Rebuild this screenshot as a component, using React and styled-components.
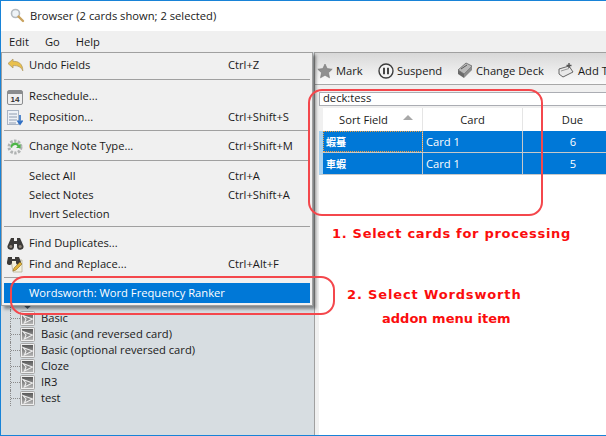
import React from "react";
import styled, { createGlobalStyle } from "styled-components";

const UI_FONT = `"Open Sans", "Noto Sans", "Liberation Sans", "Noto Sans CJK TC", sans-serif`;

const Global = createGlobalStyle`
    html, body {
        margin: 0;
        padding: 0;
        background: #fff;
    }
    body {
        font-family: ${UI_FONT};
        font-size: 11.2px;
        color: #1a1a1a;
    }
`;

const Magnifier = () => (
    <svg width="15" height="15" viewBox="0 0 15 15">
        <circle cx="5.5" cy="5.5" r="4" fill="#eef3f7" stroke="#b4babf" strokeWidth="1.6" />
        <path d="M8.5 8.5L13 13" stroke="#c9a25e" strokeWidth="2.4" strokeLinecap="round" />
    </svg>
);

const UndoIcon = () => (
    <svg width="17" height="14" viewBox="0 0 17 14">
        <path d="M1 5.5L6 1V3.4C11 3 15.8 5.5 15.8 12.8C14 8.8 11 7.4 6 7.6V10Z" fill="#e9c04d" stroke="#b39a62" strokeWidth="0.8" strokeLinejoin="round" />
    </svg>
);

const CalendarIcon = () => (
    <svg width="16" height="16" viewBox="0 0 16 16">
        <rect x="0.5" y="1.5" width="15" height="14" rx="1.5" fill="#efefef" stroke="#8b8d8f" />
        <rect x="1" y="2" width="14" height="3" fill="#8a8c8e" />
        <text x="8" y="13" textAnchor="middle" fontSize="8" fontWeight="700" fontFamily="Liberation Sans" fill="#333">14</text>
    </svg>
);

const RepositionIcon = () => (
    <svg width="16" height="16" viewBox="0 0 16 16">
        <rect x="0.5" y="0.5" width="11" height="14" fill="#eef2f7" stroke="#a9b4c4" />
        <path d="M2 4H10M2 7H10M2 10H10M2 13H9" stroke="#8f9cb0" />
        <path d="M13 5V13M10.5 10.5L13 14L15.5 10.5" fill="none" stroke="#2f6fc4" strokeWidth="1.6" />
    </svg>
);

const GearIcon = () => (
    <svg width="16" height="16" viewBox="0 0 16 16">
        <circle cx="8" cy="8" r="6" fill="none" stroke="#b0b3b3" strokeWidth="3" strokeDasharray="2.4 1.4" />
        <path d="M3.5 8A4.5 4.5 0 0 1 12 6L13.5 4.5V9H9L10.5 7.5A3 3 0 0 0 5 9Z" fill="#4fb548" />
    </svg>
);

const BinocularsIcon = () => (
    <svg width="17" height="13" viewBox="0 0 17 13">
        <path d="M4 1H7V4H10V1H13L16.5 9A3.2 3.2 0 0 1 10 10V7H7V10A3.2 3.2 0 0 1 0.5 9Z" fill="#3c3a38" />
        <circle cx="3.8" cy="9.5" r="1.5" fill="#8d8377" />
        <circle cx="13.2" cy="9.5" r="1.5" fill="#8d8377" />
    </svg>
);

const ReplaceIcon = () => (
    <svg width="17" height="17" viewBox="0 0 17 17">
        <path d="M4 4H15V16H6Z" fill="#f4f1dc" stroke="#b7b29a" strokeWidth="0.8" />
        <path d="M1 1H5V3H8V1H12L14 6A2.4 2.4 0 0 1 9 7V5H5V7A2.4 2.4 0 0 1 0 6Z" fill="#3c3a38" />
        <path d="M6 15L7 12L13 6L15 8L9 14Z" fill="#e2b53c" stroke="#8a6a1c" strokeWidth="0.6" />
    </svg>
);

const StarIcon = () => (
    <svg width="16" height="16" viewBox="0 0 16 16">
        <path d="M8 1L10.2 5.6L15.2 6.2L11.5 9.7L12.5 14.8L8 12.3L3.5 14.8L4.5 9.7L0.8 6.2L5.8 5.6Z" fill="#8f8f8f" stroke="#777" strokeWidth="0.6" />
    </svg>
);

const PauseIcon = () => (
    <svg width="16" height="16" viewBox="0 0 16 16">
        <circle cx="8" cy="8" r="7" fill="#f4f4f4" stroke="#3e3e3e" strokeWidth="1.4" />
        <path d="M6 4.8V11.2M10 4.8V11.2" stroke="#333" strokeWidth="1.8" />
    </svg>
);

const DeckIcon = () => (
    <svg width="16" height="17" viewBox="0 0 16 17">
        <path d="M1 8L9 1L15 4L7 12Z" fill="#b9b9b9" stroke="#555" strokeWidth="0.7" />
        <path d="M1 8L7 12V16L1 12Z" fill="#6a6a6a" />
        <path d="M7 12L15 4V8L7 16Z" fill="#8c8c8c" />
        <path d="M4 7L10 3" stroke="#555" />
    </svg>
);

const TagIcon = () => (
    <svg width="17" height="16" viewBox="0 0 17 16">
        <path d="M1 6L11 3L15 9L5 14L1 11Z" fill="#e9e9e9" stroke="#666" />
        <path d="M3 8L11 5.5" stroke="#999" />
        <path d="M11 0V5M8.5 2.5H13.5" stroke="#555" strokeWidth="1.4" />
    </svg>
);

const NoteIcon = () => (
    <svg width="15" height="15" viewBox="0 0 15 15">
        <defs>
            <linearGradient id="noteFill" x1="0" y1="0" x2="0" y2="1">
                <stop offset="0" stopColor="#5a5a5a" />
                <stop offset="1" stopColor="#b5b5b5" />
            </linearGradient>
        </defs>
        <rect x="0.5" y="0.5" width="14" height="14" rx="1" fill="#eee" stroke="#a5a5a5" />
        <rect x="2" y="2" width="11" height="11" fill="url(#noteFill)" />
        <path d="M3 4.5L12.5 8L4.5 12L6 8Z" fill="#8c8c8c" stroke="#efefef" strokeWidth="1.1" />
    </svg>
);

const DeckTreeIcon = () => (
    <svg width="15" height="15" viewBox="0 0 15 15">
        <path d="M1 8H14L7.5 14Z" fill="#4a5a6a" />
        <path d="M3 3H12V8H3Z" fill="#8a97a3" />
    </svg>
);

const MENU_ITEMS = [
    { label: "Undo Fields", shortcut: "Ctrl+Z", icon: <UndoIcon />, height: 24 },
    { sep: true, before: 2, after: 6 },
    { label: "Reschedule...", icon: <CalendarIcon />, height: 21 },
    { label: "Reposition...", shortcut: "Ctrl+Shift+S", icon: <RepositionIcon />, height: 21 },
    { sep: true, before: 2, after: 5 },
    { label: "Change Note Type...", shortcut: "Ctrl+Shift+M", icon: <GearIcon />, height: 21 },
    { sep: true, before: 3, after: 6 },
    { label: "Select All", shortcut: "Ctrl+A", height: 19 },
    { label: "Select Notes", shortcut: "Ctrl+Shift+A", height: 19 },
    { label: "Invert Selection", height: 19 },
    { sep: true, before: 2, after: 6 },
    { label: "Find Duplicates...", icon: <BinocularsIcon />, height: 21 },
    { label: "Find and Replace...", shortcut: "Ctrl+Alt+F", icon: <ReplaceIcon />, height: 21 },
    { sep: true, before: 2, after: 5 },
    { label: "Wordsworth: Word Frequency Ranker", height: 20, active: true },
];

const NOTE_TYPES = ["Basic", "Basic (and reversed card)", "Basic (optional reversed card)", "Cloze", "IR3", "test"];

const ROWS = [
    { sort: "蝦蟇", card: "Card 1", due: "6", focused: true },
    { sort: "車蝦", card: "Card 1", due: "5" },
];

const App = () => {
    return (
        <Window>
            <Global />
            <TitleBar>
                <Magnifier />
                <span>Browser (2 cards shown; 2 selected)</span>
            </TitleBar>
            <MenuBar>
                <span>Edit</span>
                <span>Go</span>
                <span>Help</span>
            </MenuBar>
            <Body>
                <Sidebar>
                    <Tree>
                        <TreeRow>
                            <TreeDots />
                            <DeckTreeIcon />
                            <TreeLabel>tess</TreeLabel>
                        </TreeRow>
                        {NOTE_TYPES.map((name) => (
                            <TreeRow key={name}>
                                <TreeDots />
                                <NoteIcon />
                                <TreeLabel>{name}</TreeLabel>
                            </TreeRow>
                        ))}
                    </Tree>
                </Sidebar>
                <Main>
                    <Toolbar>
                        <Tool $width={61}><StarIcon /><span>Mark</span></Tool>
                        <Tool $width={79}><PauseIcon /><span>Suspend</span></Tool>
                        <Tool $width={101}><DeckIcon /><span>Change Deck</span></Tool>
                        <Tool><TagIcon /><span>Add Tags</span></Tool>
                    </Toolbar>
                    <Search>deck:tess</Search>
                    <Table>
                        <HeaderRow>
                            <Head $sorted>Sort Field<SortArrow /></Head>
                            <Head>Card</Head>
                            <Head>Due</Head>
                        </HeaderRow>
                        {ROWS.map((row) => (
                            <Row key={row.sort}>
                                <SortCell $focused={row.focused}>{row.sort}</SortCell>
                                <Cell>{row.card}</Cell>
                                <Cell $center>{row.due}</Cell>
                            </Row>
                        ))}
                    </Table>
                </Main>
            </Body>

            <DropMenu>
                {MENU_ITEMS.map((item, i) =>
                    item.sep ? (
                        <Sep key={i} $before={item.before} $after={item.after} />
                    ) : (
                        <Item key={item.label} $height={item.height} $active={item.active}>
                            <ItemIcon>{item.icon}</ItemIcon>
                            <ItemLabel>{item.label}</ItemLabel>
                            {item.shortcut && <Shortcut>{item.shortcut}</Shortcut>}
                        </Item>
                    )
                )}
            </DropMenu>

            <Ring $x={308} $y={89} $w={235} $h={127} />
            <Ring $x={10} $y={276} $w={325} $h={39} />
            <Note $x={332} $y={225} $spacing={0.7}>1. Select cards for processing</Note>
            <Note $x={347} $y={286} $spacing={0.85}>2. Select Wordsworth</Note>
            <Note $x={382} $y={310} $spacing={0}>addon menu item</Note>
        </Window>
    );
};

const Window = styled.div`
    position: relative;
    box-sizing: border-box;
    width: 606px;
    height: 436px;
    overflow: hidden;
    display: flex;
    flex-direction: column;
    border-left: 1px solid #1883d7;
    border-top: 1px solid #1883d7;
    border-bottom: 1px solid #1883d7;
`;

const TitleBar = styled.div`
    height: 30px;
    flex: none;
    box-sizing: border-box;
    display: flex;
    align-items: center;
    gap: 5px;
    padding: 0 0 1px 9px;
    background: #fff;
`;

const MenuBar = styled.div`
    height: 21px;
    flex: none;
    box-sizing: border-box;
    display: flex;
    align-items: center;
    gap: 16px;
    padding-left: 8px;
    background: #f0f0f0;
`;

const Body = styled.div`
    flex: 1;
    display: flex;
    min-height: 0;
`;

const Sidebar = styled.div`
    width: 313px;
    flex: none;
    background: #d7dde1;
    display: flex;
    flex-direction: column;
    justify-content: flex-end;
    padding-bottom: 29px;
`;

const Tree = styled.div`
    display: flex;
    flex-direction: column;
`;

const TreeRow = styled.div`
    height: 16px;
    display: flex;
    align-items: center;
    padding-left: 9px;
`;

const TreeDots = styled.i`
    width: 10px;
    height: 16px;
    flex: none;
    box-sizing: border-box;
    border-left: 1px dotted #8a8a8a;
    background: repeating-linear-gradient(90deg, #8a8a8a 0 1px, transparent 1px 2px) no-repeat 0 8px / 100% 1px;
`;

const TreeLabel = styled.span`
    margin: 0 0 2px 6px;
`;

const Main = styled.div`
    flex: 1;
    min-width: 0;
    display: flex;
    flex-direction: column;
    background: #f0f0f0;
    border-left: 1px solid #a0a0a0;
`;

const Toolbar = styled.div`
    height: 33px;
    flex: none;
    box-sizing: border-box;
    display: flex;
    align-items: center;
    padding: 4px 0 0 2px;
    border-top: 1px solid #a0a0a0;
    border-bottom: 1px solid #a8a8a8;
    background: linear-gradient(#d8d8d8, #fbfbfb);
`;

const Tool = styled.div`
    flex: none;
    width: ${(props) => (props.$width ? props.$width + "px" : "auto")};
    display: flex;
    align-items: center;
    gap: 3px;
    white-space: nowrap;
`;

const Search = styled.div`
    height: 14px;
    flex: none;
    margin: 7px 0 2px 4px;
    padding-left: 3px;
    line-height: 10px;
    box-sizing: border-box;
    background: #fff;
    border: 1px solid #abadb3;
    border-right: none;
`;

const Table = styled.div`
    flex: 1;
    display: flex;
    flex-direction: column;
    margin-left: 4px;
    background: #fff;
`;

const HeaderRow = styled.div`
    height: 23px;
    flex: none;
    display: grid;
    grid-template-columns: 100px 100px 100px;
    border-left: 4px solid #f0f0f0;
`;

const Head = styled.div`
    position: relative;
    display: flex;
    align-items: center;
    justify-content: center;
    padding-right: ${(props) => (props.$sorted ? "18px" : "0")};
    border-right: 1px solid #e5e5e5;
`;

const SortArrow = styled.i`
    position: absolute;
    right: 9px;
    top: 7px;
    border-left: 5px solid transparent;
    border-right: 5px solid transparent;
    border-bottom: 5px solid #a8a8a8;
`;

const Row = styled.div`
    height: 22px;
    flex: none;
    box-sizing: border-box;
    display: grid;
    grid-template-columns: 100px 100px 100px;
    background: #0078d7;
    color: #fff;
    border-left: 4px solid #a8d2f0;
    border-bottom: 1px solid #c8c8c8;
`;

const Cell = styled.div`
    display: flex;
    align-items: center;
    padding-left: ${(props) => (props.$center ? "0" : "3px")};
    border-right: ${(props) => (props.$center ? "none" : "1px solid #c8c8c8")};
    justify-content: ${(props) => (props.$center ? "center" : "flex-start")};
`;

const SortCell = styled(Cell)`
    outline: ${(props) => (props.$focused ? "1px dotted #f0a040" : "none")};
    outline-offset: -1px;
    font-family: "Noto Sans CJK TC", sans-serif;
    font-size: 10px;
    font-weight: 700;
`;

const DropMenu = styled.div`
    position: absolute;
    left: 0;
    top: 51px;
    width: 312px;
    box-sizing: border-box;
    padding: 0 2px 2px;
    background: #f0f0f0;
    border: 1px solid #a0a0a0;
    box-shadow: 3px 3px 3px rgba(0, 0, 0, 0.4);
`;

const Item = styled.div`
    height: ${(props) => props.$height}px;
    display: flex;
    align-items: center;
    white-space: nowrap;
    background: ${(props) => (props.$active ? "#0078d7" : "transparent")};
    color: ${(props) => (props.$active ? "#fff" : "#1a1a1a")};
`;

const ItemIcon = styled.span`
    width: 25px;
    flex: none;
    display: flex;
    justify-content: center;
    padding-right: 3px;
    box-sizing: border-box;
`;

const ItemLabel = styled.span`
    width: 199px;
    flex: none;
    margin-bottom: 2px;
`;

const Shortcut = styled.span`
    margin-bottom: 2px;
`;

const Sep = styled.div`
    height: 1px;
    background: #a0a0a0;
    margin-top: ${(props) => props.$before}px;
    margin-bottom: ${(props) => props.$after}px;
`;

const Ring = styled.div`
    position: absolute;
    left: ${(props) => props.$x - 1}px;
    top: ${(props) => props.$y - 1}px;
    width: ${(props) => props.$w}px;
    height: ${(props) => props.$h}px;
    box-sizing: border-box;
    border: 2px solid #f4474c;
    border-radius: 14px;
    pointer-events: none;
`;

const Note = styled.div`
    position: absolute;
    left: ${(props) => props.$x - 1}px;
    top: ${(props) => props.$y - 1}px;
    font-family: "DejaVu Sans", sans-serif;
    font-size: 13px;
    line-height: 18px;
    font-weight: 700;
    letter-spacing: ${(props) => props.$spacing}px;
    color: #fb0d0d;
    white-space: nowrap;
`;

export default App;
